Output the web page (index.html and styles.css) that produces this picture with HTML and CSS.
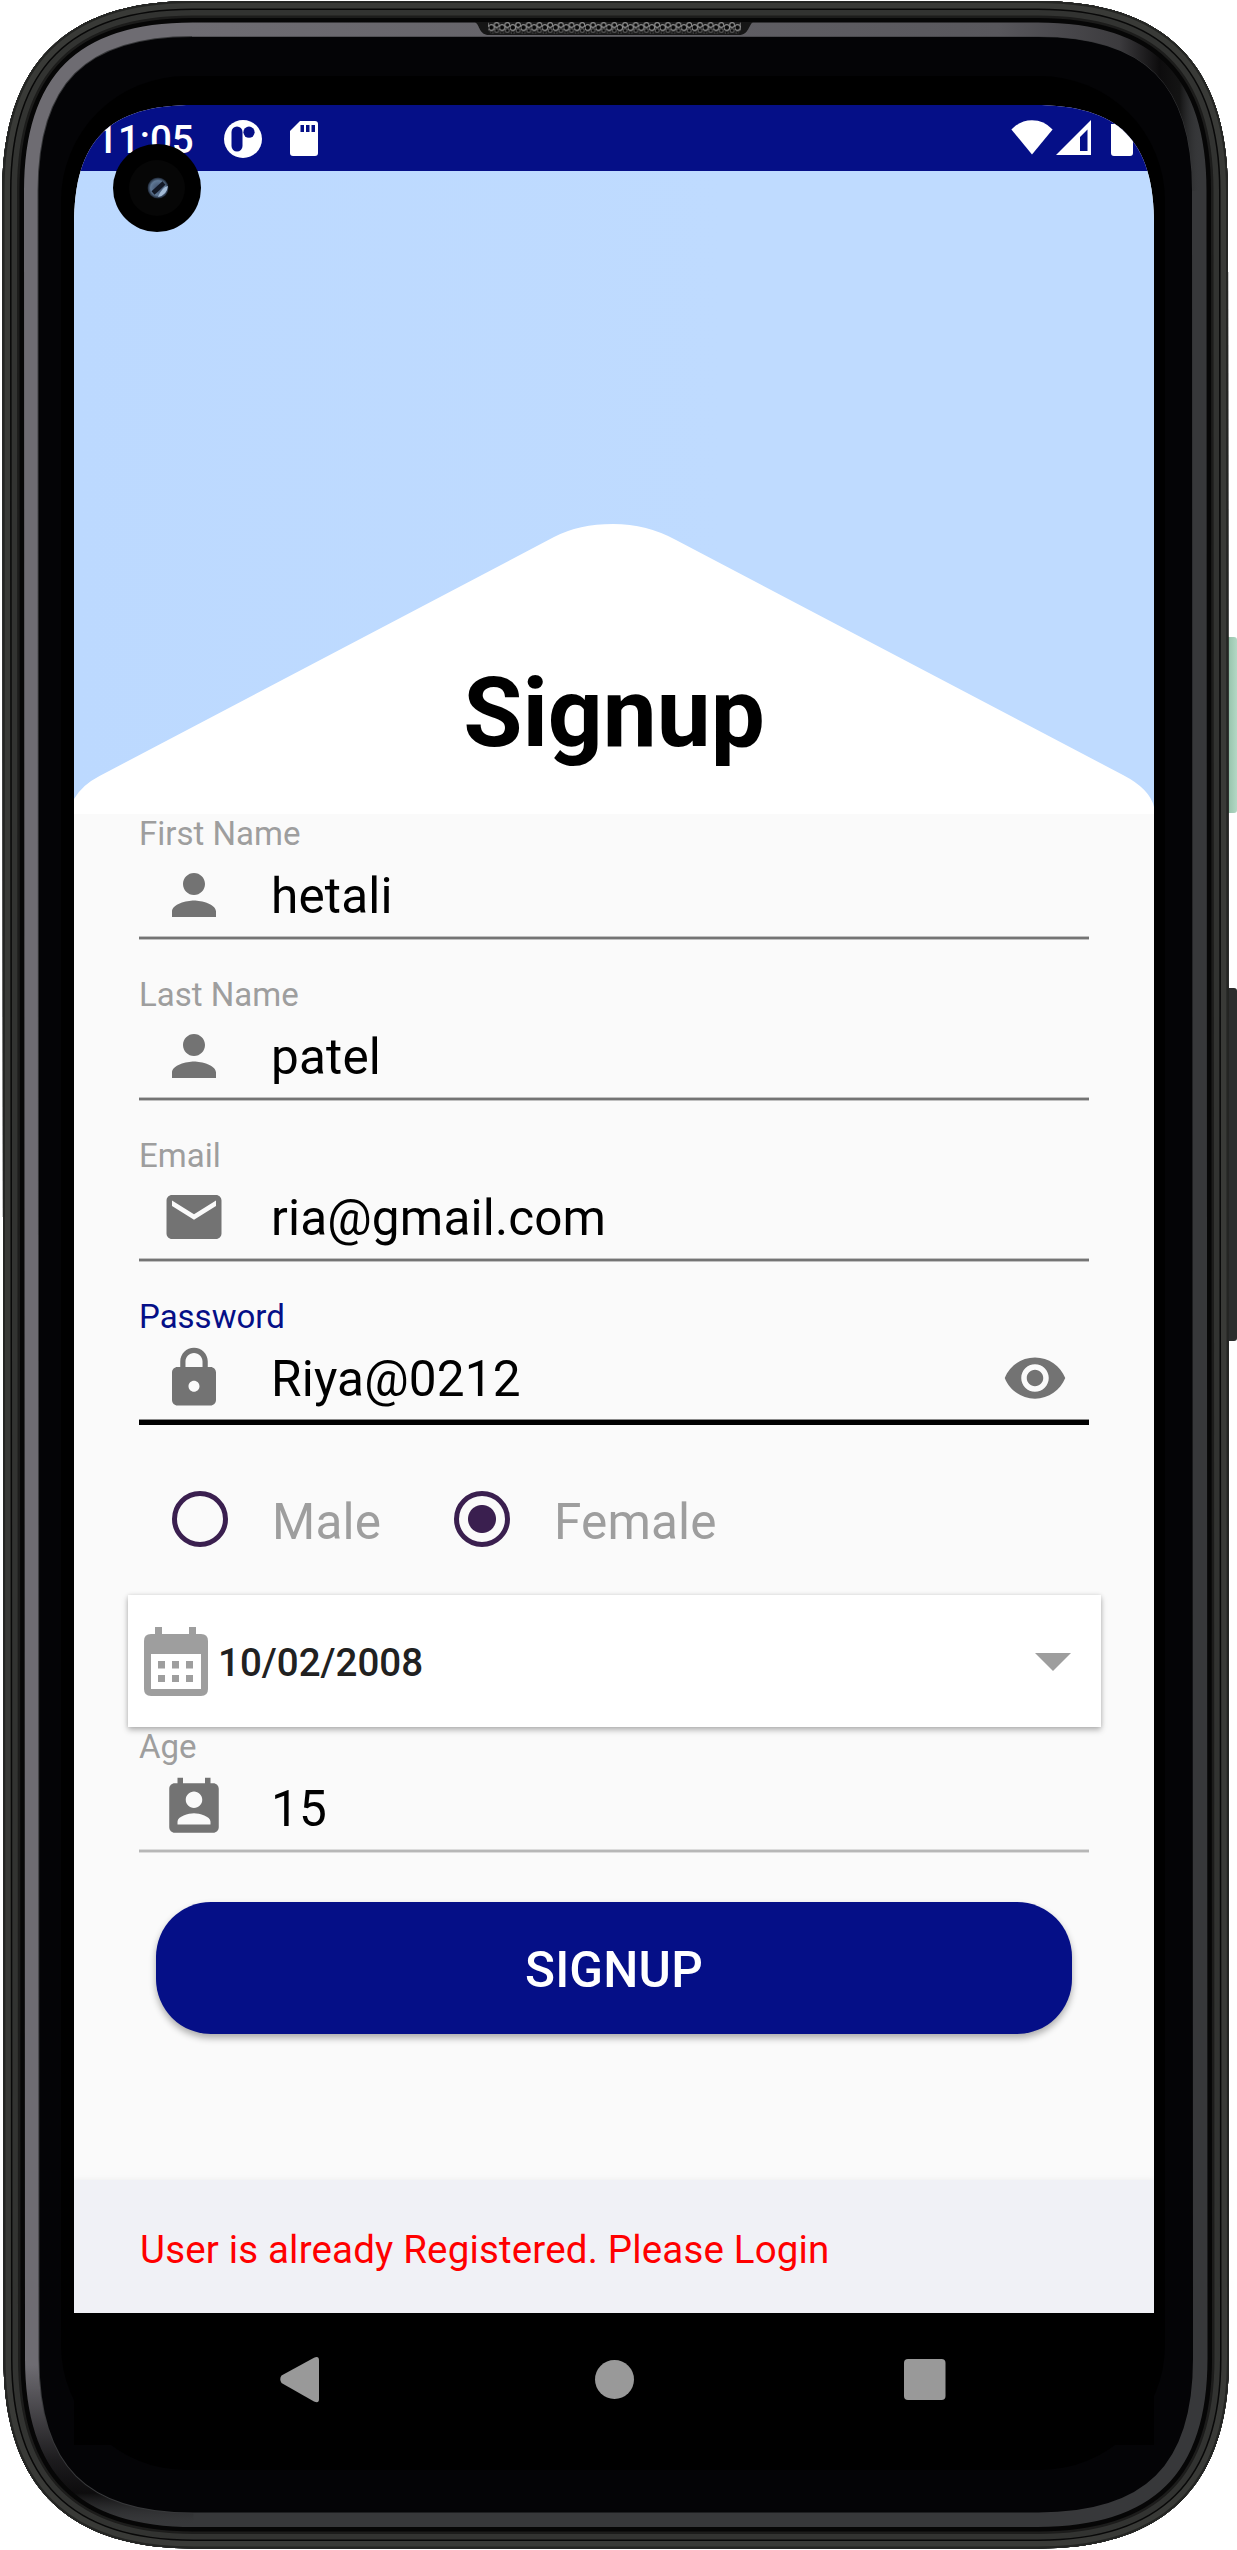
FILE: index.html
```html
<!DOCTYPE html>
<html lang="en">
<head>
<meta charset="utf-8">
<title>Signup</title>
<link rel="stylesheet" href="styles.css">
</head>
<body>
<div class="device">
  <svg class="shell" width="1237" height="2550" viewBox="0 0 1237 2550" aria-hidden="true">
    <defs>
      <path id="body" d="M2.5 191C2.5 64 65.5 1 192.5 1H1038C1165 1 1228 64 1228 191L1229 2358.500C1229 2485.500 1165 2548.500 1038 2548.500H193.500C66.500 2548.500 3.500 2485.500 3.500 2358.500Z"/>
      <clipPath id="bodyClip"><use href="#body"/></clipPath>
      <linearGradient id="mint" x1="0" x2="1"><stop offset="0" stop-color="#6f8f80"/><stop offset=".35" stop-color="#9cc7b0"/><stop offset="1" stop-color="#b3d8c5"/></linearGradient>
      <linearGradient id="shine" gradientUnits="userSpaceOnUse" x1="0" y1="2525" x2="0" y2="2365"><stop offset="0" stop-color="#37383a" stop-opacity="0"/><stop offset=".2" stop-color="#0d0c0d"/><stop offset=".4" stop-color="#1c1b1d"/><stop offset="1" stop-color="#6e6c72"/></linearGradient>
      <linearGradient id="shineTop" gradientUnits="userSpaceOnUse" x1="190" y1="0" x2="1200" y2="0"><stop offset="0" stop-color="#6e6c72"/><stop offset=".8" stop-color="#58575c"/><stop offset=".92" stop-color="#3c3b3e"/><stop offset=".96" stop-color="#0d0c0d"/><stop offset=".98" stop-color="#141414"/><stop offset="1" stop-color="#37383a" stop-opacity="0"/></linearGradient>
      <pattern id="mesh" x="478" y="22" width="10.700" height="14" patternUnits="userSpaceOnUse"><rect width="10.700" height="14" fill="#1c1c1c"/><g fill="#080808" stroke="#8b8b8b" stroke-width="1.200"><circle cx="8" cy="8.500" r="1.900" stroke="#555"/><circle cx="2.700" cy="5.500" r="2.800"/><circle cx="8" cy="3" r="2.400"/><circle cx="2.700" cy="10.800" r="1.500" stroke="#3a3a3a"/></g></pattern>
    </defs>
    <path d="M1226 637H1234Q1237 637 1237 640V810Q1237 813 1234 813H1226Z" fill="url(#mint)"/>
    <path d="M1226 988H1234Q1237 988 1237 991V1338Q1237 1341 1234 1341H1226Z" fill="#2c2d2d"/>
    <g clip-path="url(#bodyClip)" fill="none">
      <use href="#body" fill="#040406"/>
      <use href="#body" stroke="#37383a" stroke-width="72"/>
      <path d="M193.500 2548.500C66.500 2548.500 3.500 2485.500 3.500 2358.500L2.500 191C2.500 64 65.500 1 192.500 1" stroke="url(#shine)" stroke-width="70"/>
      <path d="M192 1H1038C1165 1 1228 64 1228 191" stroke="url(#shineTop)" stroke-width="71"/>
      <use href="#body" stroke="#060606" stroke-width="43"/>
      <use href="#body" stroke="#1c1c1b" stroke-width="34"/>
      <use href="#body" stroke="#323331" stroke-width="29"/>
      <use href="#body" stroke="#080808" stroke-width="18"/>
      <use href="#body" stroke="#393a37" stroke-width="15"/>
      <use href="#body" stroke="#242523" stroke-width="4"/>
    </g>
    <path d="M475 22H753C749 24 749 35 739 35H489C479 35 480 25 475 22Z" fill="#161616"/>
    <path d="M488 22H741V30L738 34H491L488 30Z" fill="url(#mesh)"/>
    <rect x="61" y="76" width="1104" height="2394" rx="125" fill="#000"/>
  </svg>

  <main class="screen">
    <header class="status">
      <span class="clock">11:05</span>
      <svg class="st-app" width="38" height="38" viewBox="0 0 38 38"><circle cx="19" cy="19" r="19" fill="#fff"/><rect x="7.500" y="6.500" width="11" height="25" rx="5.500" fill="#050f87"/><circle cx="25" cy="12.200" r="5.600" fill="#050f87"/></svg>
      <svg class="st-sd" width="28" height="35" viewBox="0 0 28 35"><path d="M10 0H25Q28 0 28 3V32Q28 35 25 35H3Q0 35 0 32V10Z" fill="#fff"/><path d="M10.500 4h3.500v7h-3.500zM16 4h3.500v7h-3.500zM21.500 4h3.500v7h-3.500z" fill="#050f87"/></svg>
      <svg class="st-wifi" width="42" height="35" viewBox="0 0 42 35"><path d="M21 34.500L.4 9.500Q9 .3 21 .3T41.600 9.500Z" fill="#fff"/></svg>
      <svg class="st-signal" width="35" height="35" viewBox="0 0 35 35"><path fill-rule="evenodd" d="M0 35L35 0V35ZM24 31H31.500V9.500L24 17Z" fill="#fff"/></svg>
      <svg class="st-battery" width="22" height="38" viewBox="0 0 22 38"><path d="M7 0H15V4H19Q22 4 22 7V33Q22 36 19 36H3Q0 36 0 33V4H7Z" fill="#fff"/></svg>
    </header>

    <section class="hero">
      <svg class="roof" width="1080" height="643" viewBox="0 0 1080 643"><path d="M0 628Q8 614 25.500 605L480 366Q505 353 539 353Q573 353 602 369L1049 604Q1076 618 1080 636V643H0Z" fill="#fff"/></svg>
      <h1>Signup</h1>
    </section>

    <form class="form">
      <div class="field">
        <label>First Name</label>
        <div class="row"><svg class="ico" viewBox="0 0 24 24"><path d="M12 12c2.210 0 4-1.790 4-4s-1.790-4-4-4-4 1.790-4 4 1.790 4 4 4zm0 2c-2.670 0-8 1.340-8 4v2h16v-2c0-2.660-5.330-4-8-4z"/></svg><span class="value">hetali</span></div>
        <div class="line"></div>
      </div>
      <div class="field">
        <label>Last Name</label>
        <div class="row"><svg class="ico" viewBox="0 0 24 24"><path d="M12 12c2.210 0 4-1.790 4-4s-1.790-4-4-4-4 1.790-4 4 1.790 4 4 4zm0 2c-2.670 0-8 1.340-8 4v2h16v-2c0-2.660-5.330-4-8-4z"/></svg><span class="value">patel</span></div>
        <div class="line"></div>
      </div>
      <div class="field">
        <label>Email</label>
        <div class="row"><svg class="ico" viewBox="0 0 24 24"><path d="M20 4H4c-1.100 0-1.990.9-1.990 2L2 18c0 1.100.9 2 2 2h16c1.100 0 2-.9 2-2V6c0-1.100-.9-2-2-2zm0 4l-8 5-8-5V6l8 5 8-5v2z"/></svg><span class="value">ria@gmail.com</span></div>
        <div class="line"></div>
      </div>
      <div class="field active">
        <label>Password</label>
        <div class="row"><svg class="ico" viewBox="0 0 24 24"><path d="M18 8h-1V6c0-2.760-2.240-5-5-5S7 3.240 7 6v2H6c-1.100 0-2 .9-2 2v10c0 1.100.9 2 2 2h12c1.100 0 2-.9 2-2V10c0-1.100-.9-2-2-2zm-6 9c-1.100 0-2-.9-2-2s.9-2 2-2 2 .9 2 2-.9 2-2 2zm3.100-9H8.900V6c0-1.710 1.390-3.100 3.100-3.100 1.710 0 3.100 1.390 3.100 3.100v2z"/></svg><span class="value">Riya@0212</span><svg class="ico eye" viewBox="0 0 24 24"><path d="M12 4.500C7 4.500 2.730 7.610 1 12c1.730 4.390 6 7.500 11 7.500s9.270-3.110 11-7.500c-1.730-4.390-6-7.500-11-7.500zM12 17c-2.760 0-5-2.240-5-5s2.240-5 5-5 5 2.240 5 5-2.240 5-5 5zm0-8c-1.660 0-3 1.340-3 3s1.340 3 3 3 3-1.340 3-3-1.340-3-3-3z"/></svg></div>
        <div class="line"></div>
      </div>

      <div class="radios">
        <span class="radio"></span><span class="opt">Male</span>
        <span class="radio on"></span><span class="opt">Female</span>
      </div>

      <div class="date">
        <svg width="64" height="69" viewBox="0 0 64 69"><path fill="#9e9e9e" fill-rule="evenodd" d="M11 0H18V7H45V0H52V7H57Q64 7 64 14V62Q64 69 57 69H7Q0 69 0 62V14Q0 7 7 7H11ZM7 27V62H57V27ZM14 34h7v7.500h-7zM28 34h7v7.500h-7zM42 34h7v7.500h-7zM14 48h7v7h-7zM28 48h7v7h-7zM42 48h7v7h-7z"/></svg>
        <span class="day">10/02/2008</span>
        <svg class="caret" width="36" height="18" viewBox="0 0 36 18"><path fill="#9e9e9e" d="M0 0H36L18 18Z"/></svg>
      </div>

      <div class="field faint">
        <label>Age</label>
        <div class="row"><svg class="ico" viewBox="0 0 24 24"><path d="M19 3h-1V1h-2v2H8V1H6v2H5c-1.110 0-2 .9-2 2v14c0 1.100.89 2 2 2h14c1.100 0 2-.9 2-2V5c0-1.100-.9-2-2-2zm-7 3c1.660 0 3 1.340 3 3s-1.340 3-3 3-3-1.340-3-3 1.340-3 3-3zm6 12H6v-1c0-2 4-3.100 6-3.100s6 1.100 6 3.100v1z"/></svg><span class="value">15</span></div>
        <div class="line"></div>
      </div>

      <button class="submit" type="button">SIGNUP</button>
    </form>

    <p class="snack">User is already Registered. Please Login</p>

    <nav class="nav">
      <svg width="1080" height="132" viewBox="0 0 1080 132" fill="#999"><path d="M207.500 62.500L240 44.800Q245 42.500 245 47.500V86Q245 91 240 88.500L207.500 70Q205 66.200 207.500 62.500Z"/><circle cx="540.500" cy="66.500" r="19.500"/><rect x="830" y="46" width="41.500" height="41" rx="4"/></svg>
    </nav>
  </main>

  <svg class="camera" width="88" height="88" viewBox="0 0 88 88"><defs><radialGradient id="lens"><stop offset="0" stop-color="#3c4c68"/><stop offset=".7" stop-color="#5f7896"/><stop offset="1" stop-color="#1a2230"/></radialGradient></defs><circle cx="44" cy="44" r="44"/><circle cx="44" cy="44" r="28" fill="#060606"/><circle cx="45" cy="44" r="10.500" fill="url(#lens)"/><path d="M45 53Q54 51 55 42Q49 43 45 53Z" fill="#a3bbd6"/><path d="M40 49L51 39" stroke="#121826" stroke-width="4.500"/></svg>
</div>
</body>
</html>
```

FILE: styles.css
```css
* { box-sizing: border-box; }

body {
  margin: 0;
  background: #fff;
  font-family: Roboto, "Liberation Sans", sans-serif;
}

.device {
  position: relative;
  width: 1237px;
  height: 2550px;
  padding: 105px 83px 105px 74px;
  overflow: hidden;
}

.shell {
  position: absolute;
  left: 0;
  top: 0;
}

.camera {
  position: absolute;
  left: 113px;
  top: 144px;
}

svg { display: block; flex: none; }

.screen {
  position: relative;
  display: flex;
  flex-direction: column;
  width: 1080px;
  height: 2340px;
  background: #fafafa;
  clip-path: path("M0 120C0 35 35 0 120 0H960C1045 0 1080 35 1080 120V2340H0Z");
}

/* status bar */
.status {
  display: flex;
  align-items: flex-start;
  height: 66px;
  padding: 15px 21px 0 22px;
  background: #050f87;
}

.clock {
  width: 128px;
  margin-top: -3px;
  font-size: 38.5px;
  font-weight: 500;
  line-height: 46px;
  color: #fff;
}

.st-sd { margin: 1px 0 0 28px; }
.st-wifi { margin-left: auto; }
.st-signal { margin: 0 20px 0 3px; }

/* header */
.hero {
  display: flex;
  align-items: flex-end;
  justify-content: center;
  height: 643px;
  background: linear-gradient(90deg, #bcd9ff, #bfdbff 60%);
}

.roof {
  position: absolute;
  left: 0;
  top: 66px;
}

h1 {
  position: relative;
  margin: 0 0 44px;
  font-size: 96.25px;
  font-weight: 700;
  line-height: 114px;
  color: #000;
}

/* form */
.form {
  display: flex;
  flex-direction: column;
  flex: 1;
}

.field {
  height: 161px;
  margin: 0 65px;
}

.field label {
  display: block;
  height: 39px;
  font-size: 33px;
  line-height: 39px;
  color: #9e9e9e;
}

.row {
  display: flex;
  height: 66px;
  margin-top: 9px;
  padding: 0 21px 0 22px;
}

.ico {
  width: 66px;
  height: 66px;
  fill: #737373;
}

.eye { margin-left: auto; }

.value {
  margin-left: 44px;
  padding-top: 1px;
  font-size: 49.5px;
  line-height: 66px;
  letter-spacing: .17px;
  color: #000;
}

.line {
  height: 4px;
  margin-top: 8px;
  background: linear-gradient(#c0c0c0 1px, #747474 1px 3px, #c0c0c0 3px);
}

.active label { color: #050f87; }

.active .line {
  height: 6px;
  background: linear-gradient(#8a8a8a 1px, #000 1px);
}

.faint .line {
  background: linear-gradient(#dcdcdc 1px, #b7b7b7 1px 3px, #dcdcdc 3px);
}

.radios {
  display: flex;
  align-items: center;
  height: 122px;
  margin-bottom: 15px;
  padding-left: 98px;
}

.radio {
  width: 56px;
  height: 56px;
  border: 5.5px solid #3a1f4f;
  border-radius: 50%;
}

.on { background: radial-gradient(circle, #3a1f4f 13.5px, transparent 14.5px); }

.opt {
  width: 182px;
  margin-left: 44px;
  padding-top: 6px;
  font-size: 49.5px;
  line-height: 58px;
  letter-spacing: .17px;
  color: #9e9e9e;
}

.date {
  display: flex;
  align-items: center;
  height: 132px;
  margin: 0 53px 0 54px;
  padding: 0 30px 0 16px;
  background: #fff;
  box-shadow: 0 3px 6px rgba(0, 0, 0, .28), 0 0 4px rgba(0, 0, 0, .1);
}

.day {
  margin: 2px 0 0 10px;
  font-size: 38.5px;
  font-weight: 500;
  color: #212121;
}

.caret { margin-left: auto; margin-top: 1px; }

.submit {
  height: 132px;
  margin: 14px 82px 0;
  padding: 4px 0 0;
  border: 0;
  border-radius: 55px;
  background: #050f87;
  box-shadow: 0 4px 7px rgba(0, 0, 0, .32);
  font: 500 49.5px/58px Roboto, "Liberation Sans", sans-serif;
  letter-spacing: .2px;
  color: #fff;
}

.snack {
  height: 133px;
  margin: 0;
  padding: 47px 66px 0;
  background: #f0f1f6;
  box-shadow: 0 0 6px rgba(0, 0, 0, .06);
  font-size: 38.5px;
  line-height: 46px;
  letter-spacing: .17px;
  color: #f00;
}

.nav {
  height: 132px;
  background: #000;
}
```
